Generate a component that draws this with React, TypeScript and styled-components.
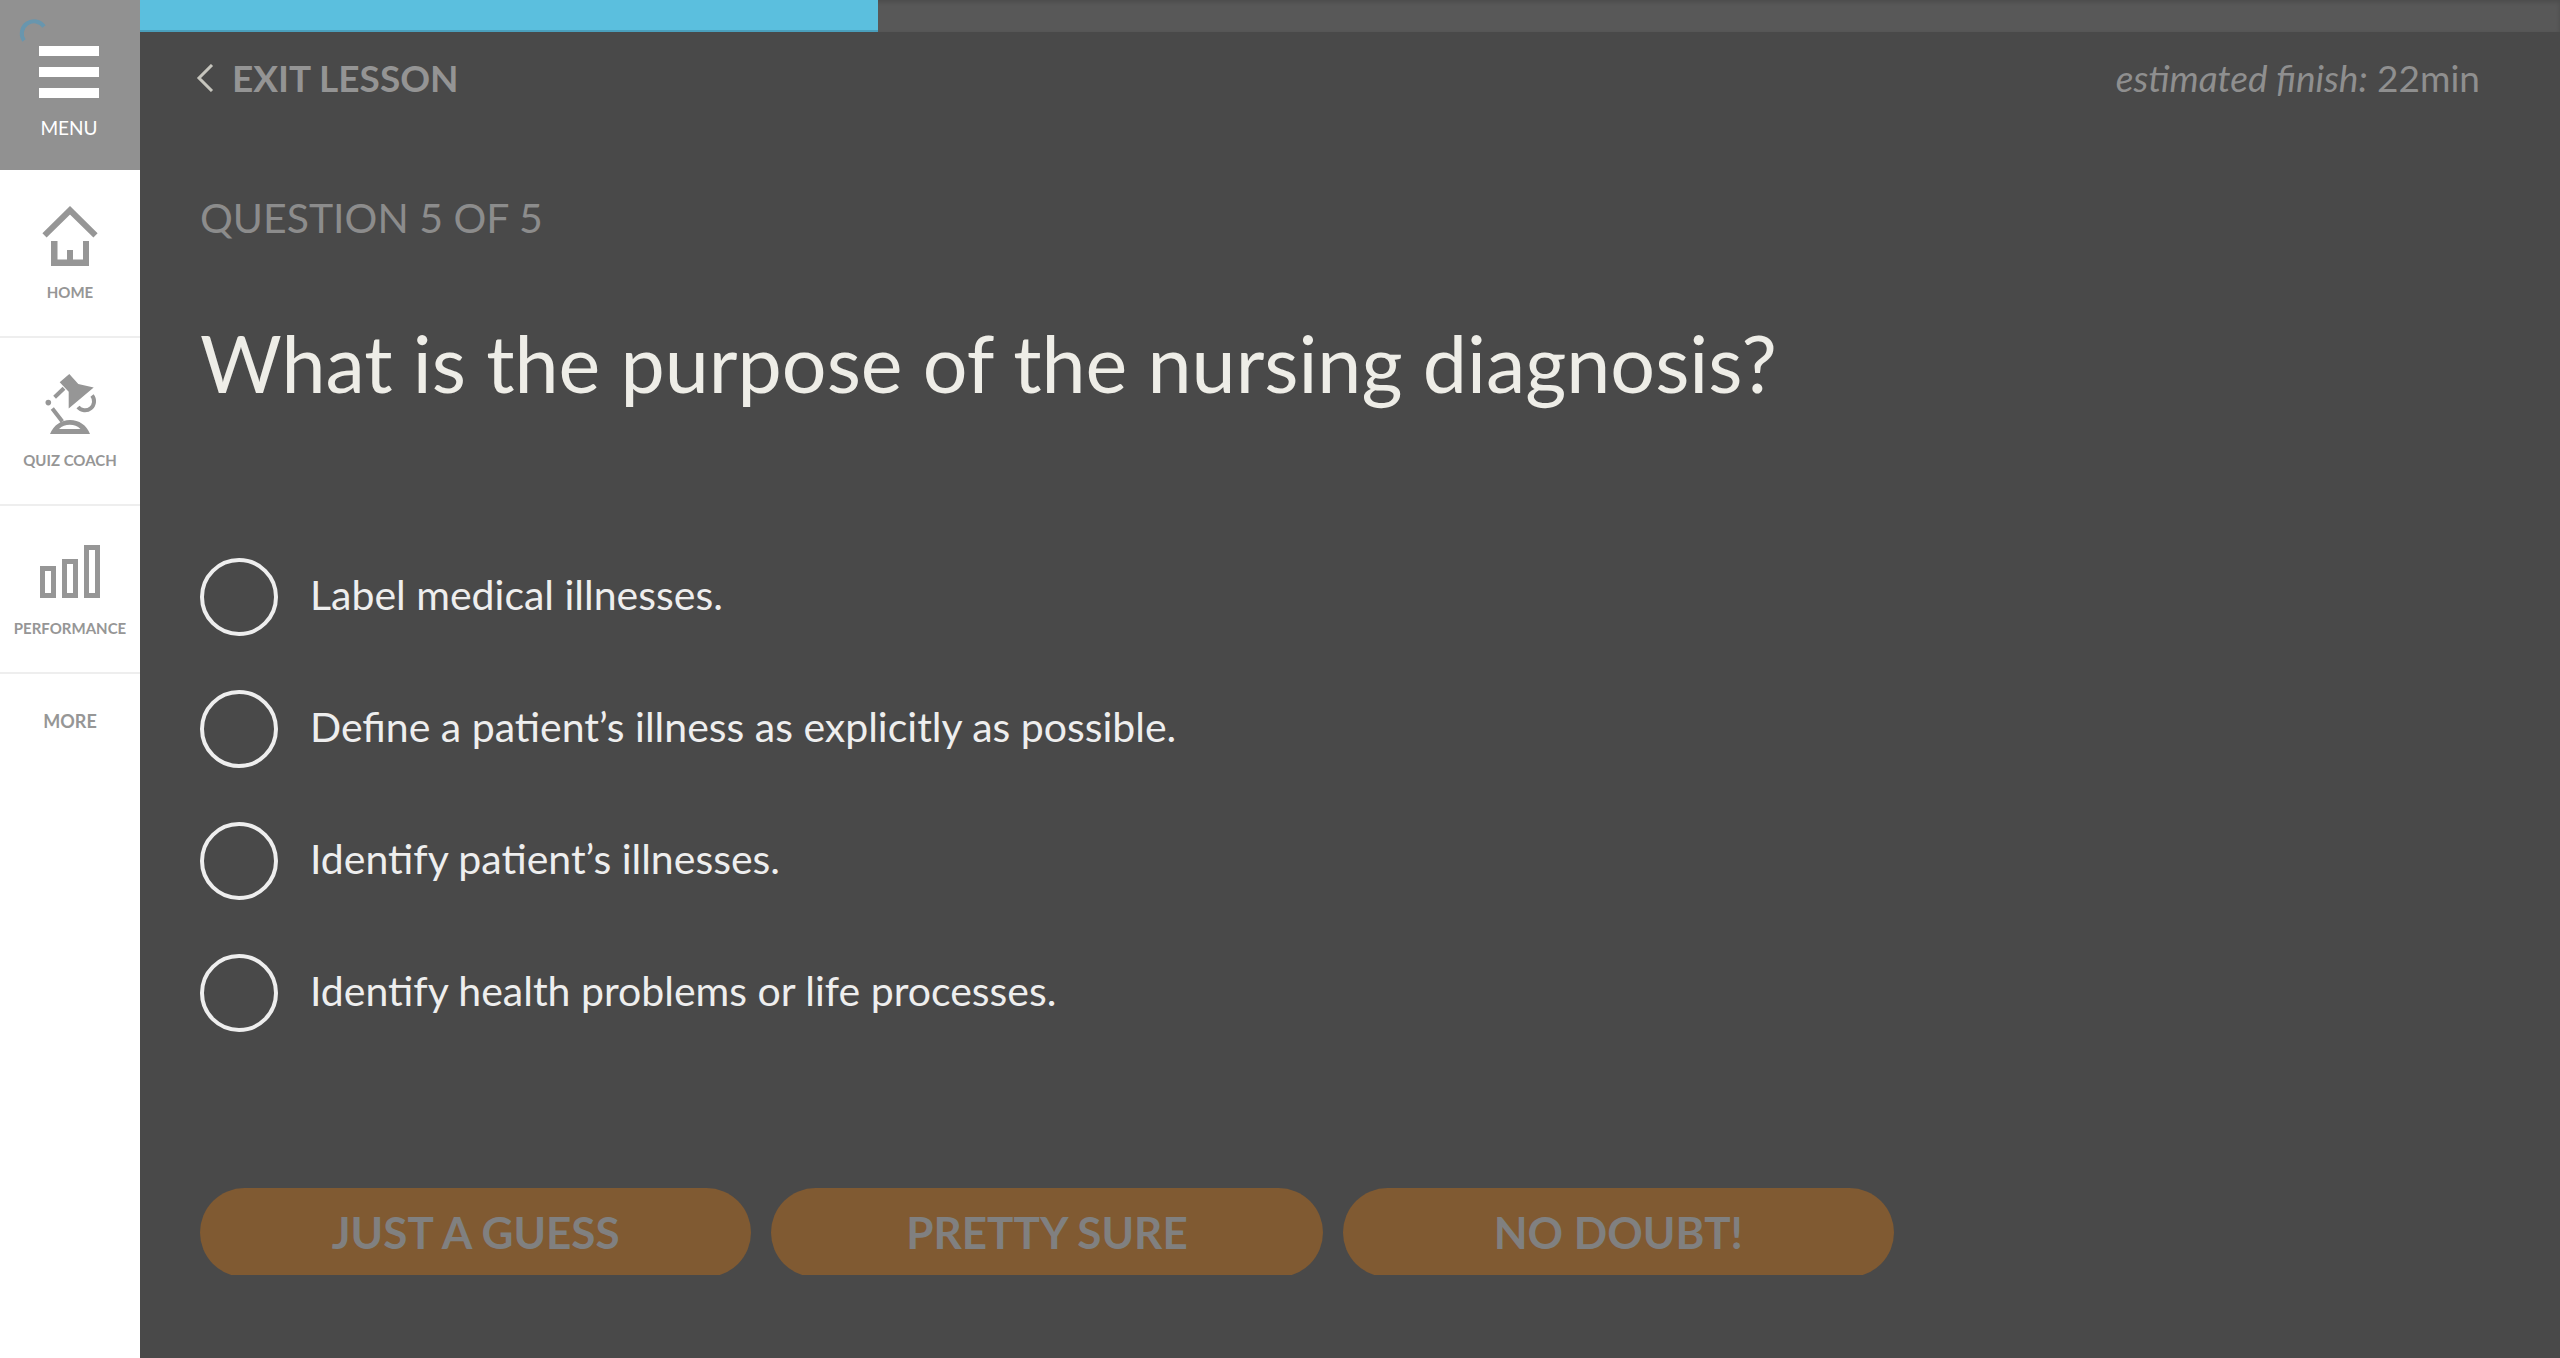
import React, { useState } from "react";
import styled, { createGlobalStyle } from "styled-components";

const GlobalStyle = createGlobalStyle`
  *, *::before, *::after { box-sizing: border-box; }
  body {
    margin: 0;
    background: #494949;
    font-family: Lato, "Open Sans", sans-serif;
  }
  button { font: inherit; border: 0; padding: 0; background: none; cursor: pointer; }
`;

const Page = styled.div`
  display: flex;
  min-height: 100vh;
`;

const Sidebar = styled.nav`
  flex: 0 0 140px;
  display: flex;
  flex-direction: column;
  background: #fff;
`;

const MenuButton = styled.button`
  position: relative;
  display: flex;
  flex-direction: column;
  align-items: center;
  gap: 18px;
  height: 170px;
  padding: 46px 2px 0 0;
  background: #919191;
  color: #fff;
  font-size: 19px;
  line-height: 24px;
`;

const Spinner = styled.svg`
  position: absolute;
  top: 18px;
  left: 18px;
  width: 32px;
  height: 32px;
`;

const NavItem = styled.a<{ $compact?: boolean }>`
  display: flex;
  flex-direction: column;
  align-items: center;
  gap: 16px;
  height: ${(p) => (p.$compact ? "96px" : "168px")};
  padding-top: 36px;
  border-bottom: ${(p) => (p.$compact ? "0" : "2px solid #eee")};
  color: #969696;
  font-size: ${(p) => (p.$compact ? "18px" : "15px")};
  font-weight: 700;
  line-height: ${(p) => (p.$compact ? "22px" : "20px")};
  text-decoration: none;
  white-space: nowrap;
`;

const Main = styled.main`
  flex: 1;
  min-width: 0;
`;

const Track = styled.div`
  height: 32px;
  background: #585858;
  box-shadow: inset 0 2px 4px rgba(0, 0, 0, 0.15);
`;

const Fill = styled.div`
  height: 100%;
  background: #5bbfde;
  border-bottom: 2px solid #4a9fbc;
`;

const Header = styled.header`
  display: flex;
  justify-content: space-between;
  align-items: center;
  padding: 22px 80px 0 56px;
  font-size: 37px;
  line-height: 48px;
`;

const ExitButton = styled.button`
  display: flex;
  align-items: center;
  gap: 18px;
  color: #949494;
  font-weight: 700;
`;

const Estimate = styled.p`
  margin: 0;
  color: #8f8f8f;
`;

const Quiz = styled.form`
  padding-left: 60px;
  margin-top: 91px;
`;

const Counter = styled.p`
  margin: 0;
  color: #8c8c8c;
  font-size: 41px;
  line-height: 50px;
`;

const Question = styled.h1`
  margin: 73px 0 0;
  color: #eeede7;
  font-size: 79px;
  font-weight: 400;
  line-height: 94px;
`;

const Options = styled.div`
  display: flex;
  flex-direction: column;
  gap: 54px;
  margin-top: 148px;
`;

const Option = styled.label`
  display: flex;
  align-items: center;
  gap: 32px;
  color: #eee;
  font-size: 41px;
  line-height: 50px;
  cursor: pointer;
`;

const OptionText = styled.span`
  padding-bottom: 4px;
`;

const Radio = styled.input`
  appearance: none;
  flex: none;
  width: 78px;
  height: 78px;
  margin: 0;
  border: 4px solid #eee;
  border-radius: 50%;
  &:checked { background: radial-gradient(#eee 0 20px, transparent 21px); }
`;

const Answers = styled.div`
  display: grid;
  grid-template-columns: repeat(3, 1fr);
  gap: 20px;
  width: 70vw;
  max-width: 1694px;
  height: 87px;
  margin-top: 156px;
  overflow: hidden;
`;

const AnswerButton = styled.button`
  height: 89px;
  padding-bottom: 2px;
  border-radius: 45px;
  background: #805a32;
  color: #808080;
  font-size: 44px;
  font-weight: 700;
`;

const NAV = [
  {
    label: "HOME",
    icon: (
      <svg width="60" height="60" viewBox="0 0 60 60" fill="#969696">
        <path d="M4.5 29.3 30 4.3l25.500 25" fill="none" stroke="#969696" strokeWidth="6" />
        <path d="M11 35h6.500v18.500H27V44h6v9.500h10V35h6v25H11z" />
      </svg>
    ),
  },
  {
    label: "QUIZ COACH",
    icon: (
      <svg width="60" height="60" viewBox="0 0 60 60" fill="#969696">
        <path d="M29.300 0l9 10 15.400 3.400-25 21V17.700l-9-9.400z" />
        <path
          d="M24 14.300l-9.400 9M12.300 34.500l10 13M38 33a9 9 0 0 0 14-11.500"
          fill="none"
          stroke="#969696"
          strokeWidth="4"
        />
        <circle cx="8.300" cy="28.600" r="2.800" />
        <path d="M10 60c4-9 11-14 20-14s16.500 5 20 14zM19 55h21.500c-3-3-6.500-4.300-10.700-4.300S22 52 19 55z" fillRule="evenodd" />
      </svg>
    ),
  },
  {
    label: "PERFORMANCE",
    icon: (
      <svg width="60" height="60" viewBox="0 0 60 60" fill="none" stroke="#969696" strokeWidth="5">
        <path d="M2.500 26.500h11v27h-11zM24.500 19.500h11v34h-11zM46.500 5.500h11v48h-11z" />
      </svg>
    ),
  },
];

const CHOICES = [
  "Label medical illnesses.",
  "Define a patient’s illness as explicitly as possible.",
  "Identify patient’s illnesses.",
  "Identify health problems or life processes.",
];

const CONFIDENCE = ["JUST A GUESS", "PRETTY SURE", "NO DOUBT!"];

export default function App() {
  const [choice, setChoice] = useState<number | null>(null);
  const progress = 30.5;

  return (
    <Page>
      <GlobalStyle />
      <Sidebar>
        <MenuButton type="button">
          <Spinner viewBox="0 0 32 32" fill="none" stroke="#6896ae" strokeWidth="4">
            <path d="M6 22.500A12 12 0 0 1 26 8.500" />
          </Spinner>
          <svg width="60" height="52" viewBox="0 0 60 52" fill="#fff">
            <path d="M0 0h60v10H0zM0 21h60v10H0zM0 42h60v10H0z" />
          </svg>
          MENU
        </MenuButton>
        {NAV.map((item) => (
          <NavItem key={item.label} href="#">
            {item.icon}
            {item.label}
          </NavItem>
        ))}
        <NavItem href="#" $compact>
          MORE
        </NavItem>
      </Sidebar>
      <Main>
        <Track role="progressbar" aria-valuenow={progress}>
          <Fill style={{ width: `${progress}%` }} />
        </Track>
        <Header>
          <ExitButton type="button">
            <svg width="18" height="28" viewBox="0 0 18 28" fill="none" stroke="#c6c5bd" strokeWidth="3">
              <path d="M16 1 3 14l13 13" />
            </svg>
            EXIT LESSON
          </ExitButton>
          <Estimate>
            <em>estimated finish:</em> 22min
          </Estimate>
        </Header>
        <Quiz onSubmit={(e) => e.preventDefault()}>
          <Counter>QUESTION 5 OF 5</Counter>
          <Question>What is the purpose of the nursing diagnosis?</Question>
          <Options role="radiogroup">
            {CHOICES.map((text, i) => (
              <Option key={text}>
                <Radio type="radio" name="answer" checked={choice === i} onChange={() => setChoice(i)} />
                <OptionText>{text}</OptionText>
              </Option>
            ))}
          </Options>
          <Answers>
            {CONFIDENCE.map((label) => (
              <AnswerButton key={label} type="submit">
                {label}
              </AnswerButton>
            ))}
          </Answers>
        </Quiz>
      </Main>
    </Page>
  );
}
